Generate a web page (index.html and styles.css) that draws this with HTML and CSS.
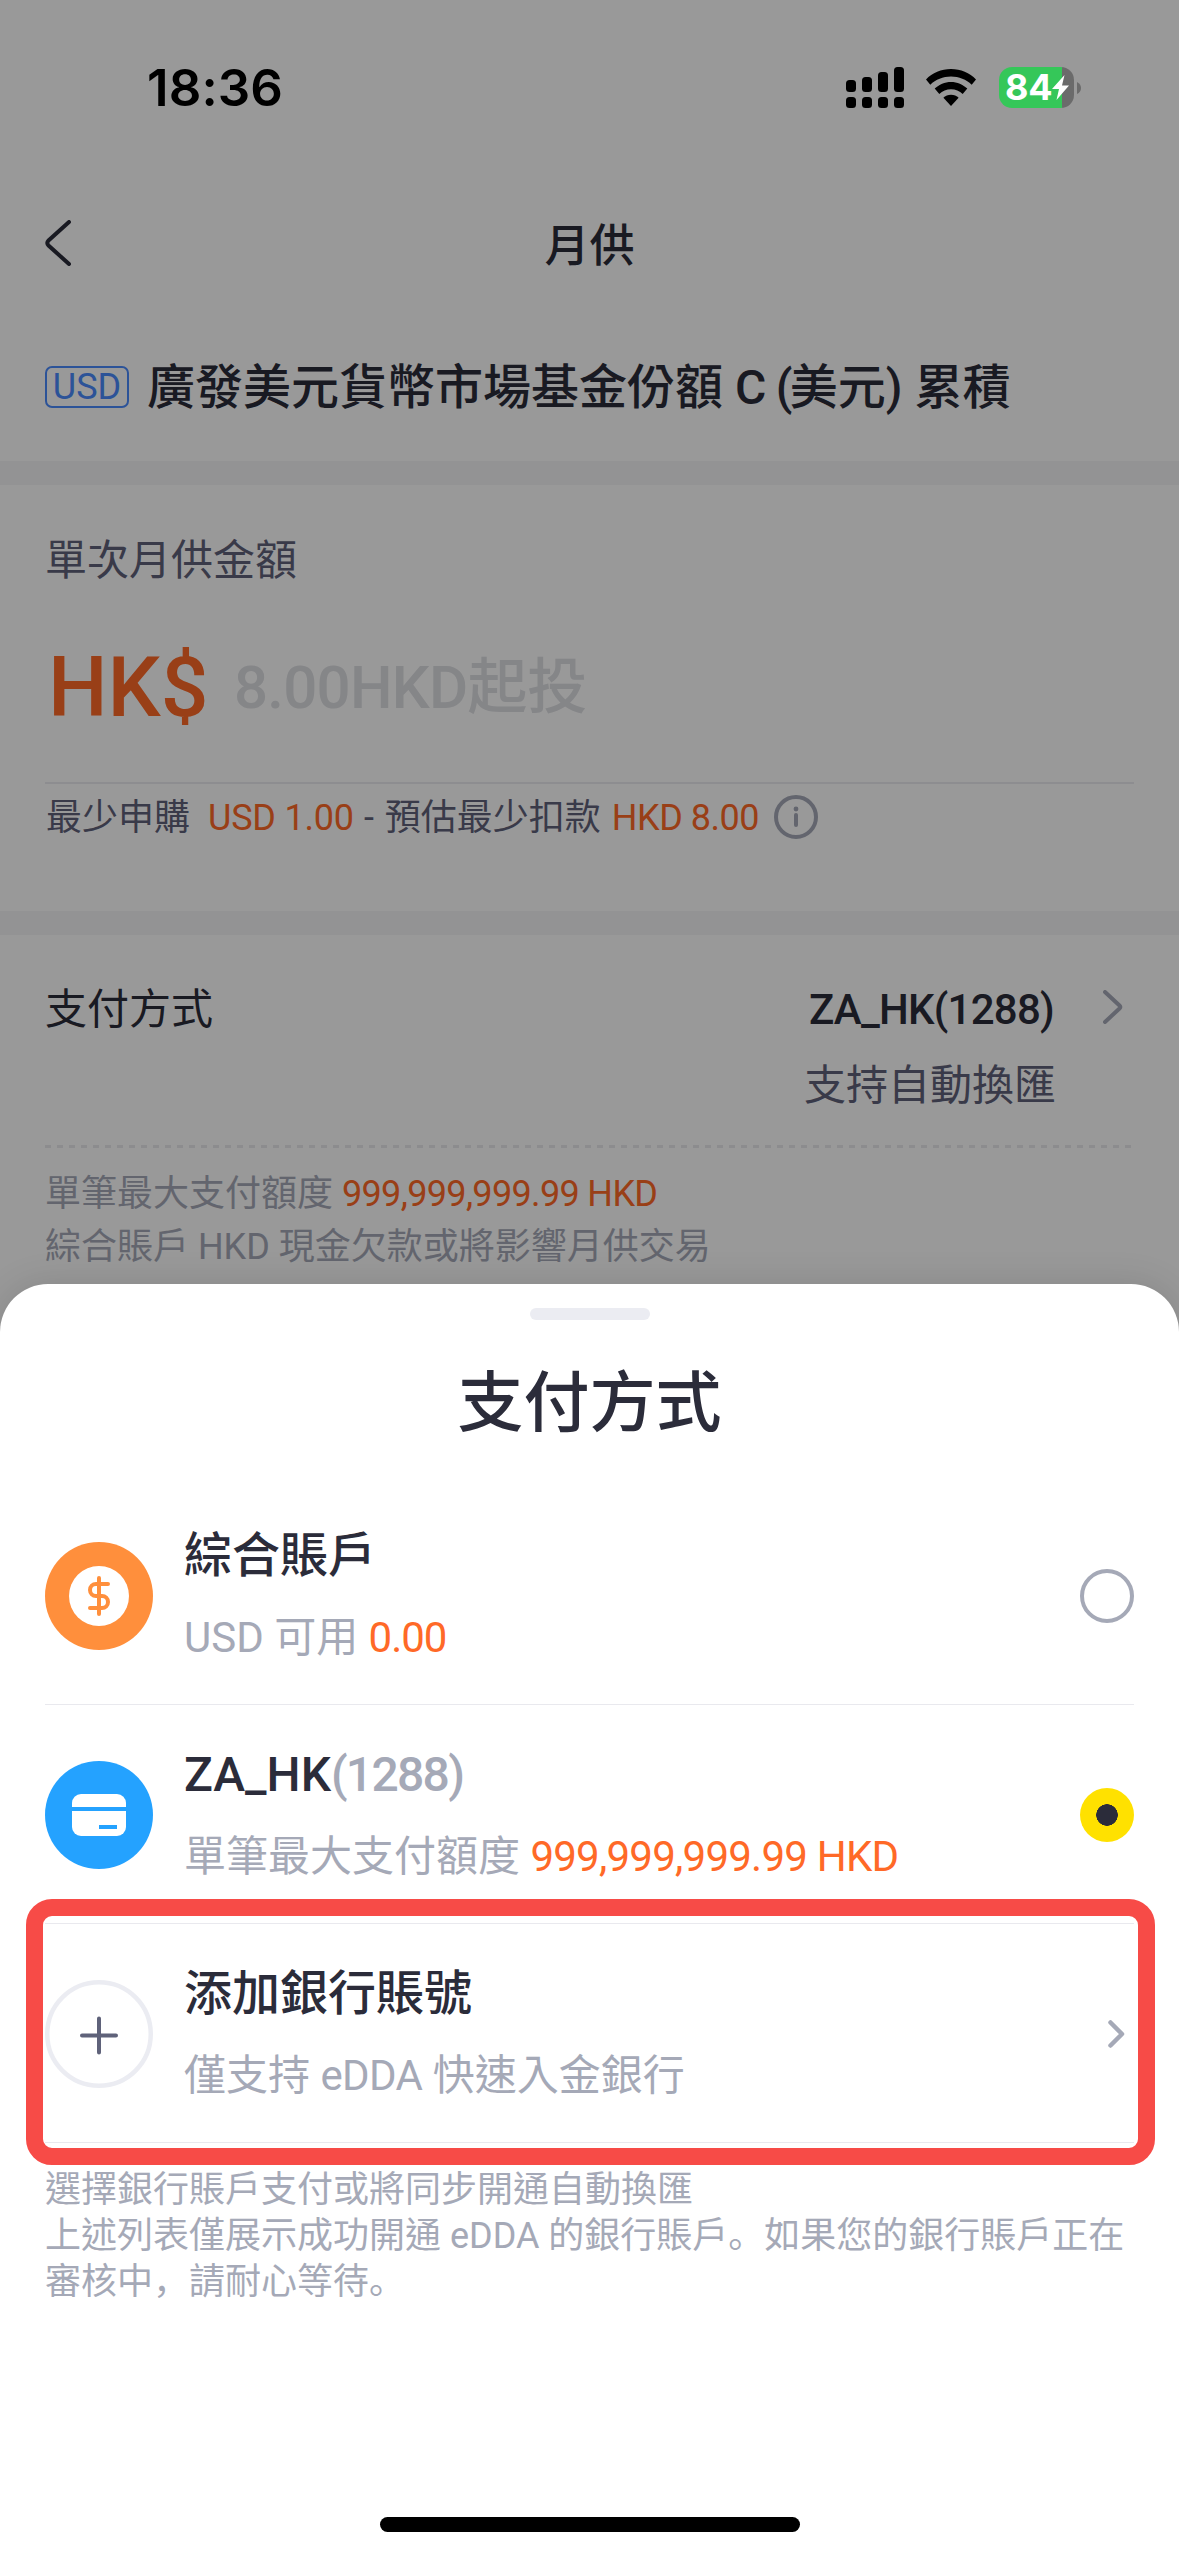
FILE: index.html
```html
<!DOCTYPE html>
<html lang="zh-Hant">
<head>
<meta charset="utf-8">
<title>月供</title>
<link rel="stylesheet" href="styles.css">
</head>
<body>
<div class="screen">
  <header class="statusbar">
    <span class="clock">18:36</span>
    <div class="status-icons">
      <svg class="signal" width="58" height="41" viewBox="0 0 58 41">
        <rect x="0" y="13" width="10" height="12" rx="3.5"/><rect x="16" y="10" width="10" height="15" rx="3.5"/><rect x="32" y="5" width="10" height="20" rx="3.5"/><rect x="48" y="0" width="10" height="25" rx="3.5"/>
        <rect x="0" y="30" width="10" height="11" rx="3.5"/><rect x="16" y="30" width="10" height="11" rx="3.5"/><rect x="32" y="30" width="10" height="11" rx="3.5"/><rect x="48" y="30" width="10" height="11" rx="3.5"/>
      </svg>
      <svg class="wifi" width="50" height="37" viewBox="0 0 50 37">
        <path d="M25 0C34.700 0 43.600 3.800 50 10.500L45.700 15.700C40.300 10.500 33 7.500 25 7.500S9.700 10.500 4.300 15.700L0 10.500C6.400 3.800 15.300 0 25 0Z"/>
        <path d="M25 12.900C31.200 12.900 37 15.400 41.300 19.600L36.700 25C33.600 22.100 29.500 20.300 25 20.300S16.400 22.100 13.300 25L8.700 19.600C13 15.400 18.800 12.900 25 12.900Z"/>
        <path d="M25 25.700C28 25.700 30.700 26.900 32.600 28.800L25 37L17.400 28.800C19.300 26.900 22 25.700 25 25.700Z"/>
      </svg>
      <div class="battery">
        <span class="battery-level">84</span>
        <svg class="bolt" width="17" height="25" viewBox="0 0 17 25"><path d="M12.500 0L0 14H7L4.500 25L17 10.500H10Z"/></svg>
      </div>
      <svg class="battery-tip" width="4" height="12" viewBox="0 0 4 12"><path d="M0 0Q4 2 4 6T0 12Z"/></svg>
    </div>
  </header>

  <main class="page">
    <nav class="navbar">
      <svg class="back" width="28" height="46" viewBox="0 0 28 46"><path d="M25 2L4.500 20.500Q2 23 4.500 25.500L25 44"/></svg>
      <h1 class="nav-title">月供</h1>
    </nav>
    <section class="fund">
      <span class="currency">USD</span>
      <h2 class="fund-name">廣發美元貨幣市場基金份額 C<span class="paren"> (</span>美元) 累積</h2>
    </section>

    <section class="card amount">
      <div class="amount-label">單次月供金額</div>
      <div class="amount-input"><span class="unit">HK$</span><span class="placeholder"><span class="ph-num">8.00HKD</span>起投</span></div>
      <div class="hint">
        <span>最少申購</span><span class="orange hint-usd">USD 1.00</span><span class="dash">-</span><span>預估最少扣款</span><span class="orange hint-hkd">HKD 8.00</span>
        <svg class="info" width="44" height="44" viewBox="0 0 44 44"><circle cx="22" cy="22" r="20"/><path d="M22 20V30"/><circle class="dot" cx="22" cy="14" r="2.400"/></svg>
      </div>
    </section>

    <section class="card method">
      <div class="method-row">
        <div class="method-label">支付方式</div>
        <div class="method-value"><div class="bank">ZA_HK(1288)</div><div class="fx">支持自動換匯</div></div>
        <svg class="more" width="20" height="34" viewBox="0 0 20 34"><path d="M2 2L16.500 15.500Q18 17 16.500 18.500L2 32"/></svg>
      </div>
      <div class="dashes"></div>
      <p class="note">單筆最大支付額度 <span class="orange num">999,999,999.99 HKD</span></p>
      <p class="note">綜合賬戶 HKD 現金欠款或將影響月供交易</p>
    </section>
  </main>

  <div class="scrim"></div>

  <section class="sheet">
    <div class="handle"></div>
    <h2 class="sheet-title">支付方式</h2>
    <div class="option">
      <svg class="avatar" width="108" height="108" viewBox="0 0 108 108"><circle cx="54" cy="54" r="54" fill="#ff8f3c"/><circle cx="54" cy="54" r="30" fill="#fff"/><path class="dollar" d="M63 42H51A6 6 0 0 0 51 54H57A6 6 0 0 1 57 66H45M54 36V72"/></svg>
      <div class="option-text"><div class="name">綜合賬戶</div><div class="sub">USD 可用 <span class="orange balance">0.00</span></div></div>
      <span class="radio"></span>
    </div>
    <div class="option">
      <svg class="avatar" width="108" height="108" viewBox="0 0 108 108"><circle cx="54" cy="54" r="54" fill="#24a2ff"/><rect x="27" y="33" width="54" height="42" rx="9" fill="#fff"/><path d="M27 46H81V50H27ZM54 64H72V68H54Z" fill="#24a2ff"/></svg>
      <div class="option-text"><div class="name">ZA_HK<span class="tail">(1288)</span></div><div class="sub">單筆最大支付額度 <span class="orange num">999,999,999.99 HKD</span></div></div>
      <span class="radio checked"></span>
    </div>
    <div class="option">
      <svg class="avatar" width="108" height="108" viewBox="0 0 108 108"><circle cx="54" cy="54" r="51.750" fill="none" stroke="#ebecf2" stroke-width="4.500"/><path class="plus" d="M37 55.500H71M54 38.500V72.500"/></svg>
      <div class="option-text"><div class="name">添加銀行賬號</div><div class="sub">僅支持 <span class="edda">eDDA</span> 快速入金銀行</div></div>
      <svg class="go" width="17" height="28" viewBox="0 0 17 28"><path d="M2.500 2.500L14 14L2.500 25.500"/></svg>
      <span class="highlight"></span>
    </div>
    <p class="footnote">選擇銀行賬戶支付或將同步開通自動換匯<br>上述列表僅展示成功開通 eDDA 的銀行賬戶<span class="punct" lang="zh-Hans">。</span>如果您的銀行賬戶正在審核中<span class="punct" lang="zh-Hans">，</span>請耐心等待<span class="punct" lang="zh-Hans">。</span></p>
    <div class="home"></div>
  </section>
</div>
</body>
</html>
```

FILE: styles.css
```css
* { box-sizing: border-box; margin: 0; padding: 0; }
body { background: #fff; }
.screen {
  position: relative; width: 1179px; height: 2556px; overflow: hidden;
  display: flex; flex-direction: column;
  background: #fff; color: #2b2c3a;
  font-family: Roboto, "Noto Sans CJK TC", sans-serif; font-weight: 400;
}
svg { display: block; flex: none; }
h1, h2 { font-weight: 500; }
.orange { color: #ff6927; }

/* status bar stays above the scrim */
.statusbar {
  position: relative; z-index: 2; flex: none; height: 175px;
  display: flex; justify-content: space-between; padding: 0 98px 0 147px; color: #000;
}
.clock { font: 600 51px/176px Inter, sans-serif; letter-spacing: 0.1px; }
.status-icons { display: flex; align-items: center; }
.wifi { margin-left: 22px; }
.battery {
  width: 75px; height: 41px; margin-left: 23px; border-radius: 13px;
  display: flex; align-items: center; padding-left: 6px;
  background: linear-gradient(90deg, #35c759 63px, #6b6b6b 63px);
}
.battery-level { font: 700 36px/41px Inter, sans-serif; color: #fff; width: 47px; letter-spacing: -0.3px; }
.bolt { fill: #fff; }
.battery-tip { margin-left: 3px; fill: #6b6b6b; }

.page { flex: none; }
.navbar { height: 142px; display: grid; grid-template-columns: 28px 1fr 28px; align-items: center; padding: 0 45px 0 44px; }
.back { fill: none; stroke: #2b2c3a; stroke-width: 4; stroke-linecap: round; margin-bottom: 7px; }
.nav-title { font-size: 45px; line-height: 60px; text-align: center; padding: 1px 0 0 1px; }
.fund { height: 144px; display: flex; padding: 49px 45px 0; gap: 18px; }
.currency { width: 84px; height: 42px; border: 2px solid #4a8afe; border-radius: 7px; color: #4a8afe; font-size: 36px; line-height: 39px; text-align: center; }
.fund-name { font-size: 48px; line-height: 44px; white-space: nowrap; }
.paren { letter-spacing: -2.5px; }

.card { border-top: 24px solid #f5f5f7; padding: 0 45px; }
.amount { height: 450px; }
.amount-label { padding-top: 46px; font-size: 42px; line-height: 60px; color: #5f627a; }
.amount-input { height: 193px; display: flex; align-items: center; border-bottom: 2px solid #ebecf0; line-height: 84px; font-weight: 500; padding: 2px 0 0 3px; }
.unit { width: 186px; font-size: 84px; color: #ff6927; }
.placeholder { font-size: 60px; color: #dedfe3; }
.ph-num { letter-spacing: -0.75px; }
.hint { display: flex; align-items: center; margin-top: 9px; height: 50px; padding-left: 1px; font-size: 36px; line-height: 50px; color: #5f627a; white-space: nowrap; }
.hint-usd { margin-left: 18px; letter-spacing: -0.2px; }
.dash { margin: 0 11px 0 10px; }
.hint-hkd { margin-left: 11px; letter-spacing: -0.5px; }
.info { margin: -2px 0 0 15px; fill: none; stroke: #a5a9b7; stroke-width: 4; stroke-linecap: round; }
.info .dot { fill: #a5a9b7; stroke: none; }

.method-row { display: flex; padding-top: 45px; height: 210px; font-size: 42px; line-height: 60px; }
.method-label { flex: 1; }
.method-value { text-align: right; }
.bank { font-weight: 500; letter-spacing: -0.75px; margin-right: 2px; }
.fx { margin-top: 16px; color: #5f627a; }
.more { margin: 10px 11px 0 47px; fill: none; stroke: #a5a9b7; stroke-width: 4; stroke-linecap: round; }
.dashes { height: 3px; margin-bottom: 20px; background: repeating-linear-gradient(90deg, #e9e9ed 0 6px, transparent 6px 12px); }
.note { font-size: 36px; line-height: 53px; color: #a5a9b7; white-space: nowrap; }
.num { letter-spacing: -0.018em; }

.scrim { position: absolute; inset: 0; z-index: 1; background: rgba(0, 0, 0, .4); }

.sheet {
  position: absolute; z-index: 3; left: 0; right: 0; bottom: 0; height: 1272px;
  background: #fff; border-radius: 48px 48px 0 0; padding: 24px 45px 0;
  display: flex; flex-direction: column; box-shadow: 0 0 36px rgba(0, 0, 0, .12);
}
.handle { flex: none; width: 120px; height: 12px; border-radius: 6px; background: #ebecf2; align-self: center; }
.sheet-title { flex: none; height: 166px; padding-top: 44px; font-size: 66px; line-height: 80px; text-align: center; }
.option { position: relative; flex: none; height: 219px; padding-top: 2px; display: flex; align-items: center; border-bottom: 1px solid #e9e9ee; }
.option-text { flex: 1; margin-left: 31px; }
.name { font-size: 48px; font-weight: 500; line-height: 60px; margin-top: 2px; }
.tail { color: #a5a9b7; letter-spacing: -1.700px; }
.sub { font-size: 42px; line-height: 60px; margin-top: 22px; color: #a5a9b7; white-space: nowrap; }
.balance { letter-spacing: -1px; }
.edda { letter-spacing: -0.6px; }
.dollar { fill: none; stroke: #ff8f3c; stroke-width: 4; stroke-linecap: round; }
.plus { fill: none; stroke: #5f627a; stroke-width: 4; stroke-linecap: round; }
.radio { width: 54px; height: 54px; border: 4px solid #a5a9b7; border-radius: 50%; }
.radio.checked { border: 0; background: radial-gradient(circle, #2b2c3a 10.500px, #ffe100 11px); }
.go { margin-right: 9px; fill: none; stroke: #a5a9b7; stroke-width: 4.500; stroke-linecap: round; stroke-linejoin: round; }
.highlight { position: absolute; left: -19px; top: -25px; width: 1129px; height: 266px; border: 17px solid #f74b47; border-radius: 26px; }
.footnote { font-size: 36px; line-height: 46px; color: #a5a9b7; margin-top: 24px; }
.punct { display: inline-block; font-family: Roboto, "Noto Sans CJK SC", sans-serif; }
.home { width: 420px; height: 15px; border-radius: 8px; background: #000; align-self: center; margin: auto 0 24px; }
```
